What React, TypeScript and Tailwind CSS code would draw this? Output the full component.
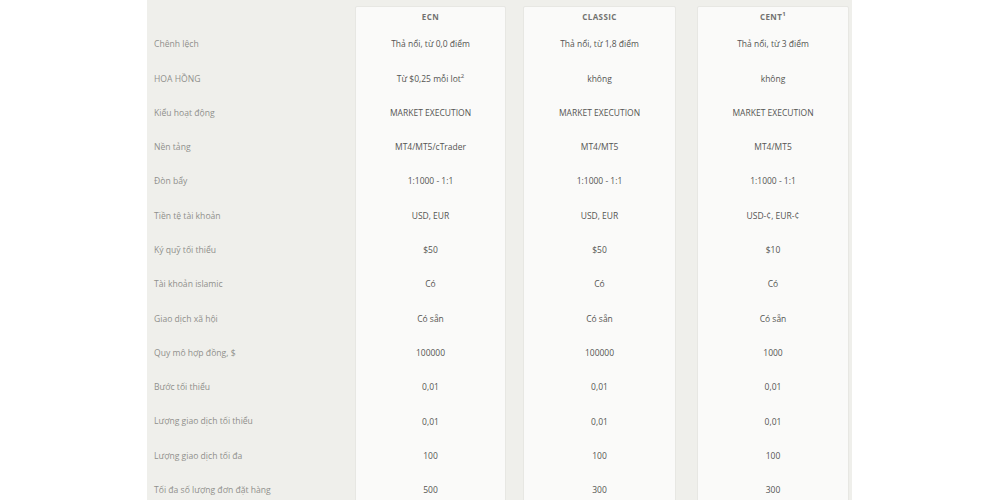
// @ts-nocheck
const labels = [
  "Chênh lệch",
  "HOA HỒNG",
  "Kiểu hoạt động",
  "Nền tảng",
  "Đòn bẩy",
  "Tiền tệ tài khoản",
  "Ký quỹ tối thiểu",
  "Tài khoản islamic",
  "Giao dịch xã hội",
  "Quy mô hợp đồng, $",
  "Bước tối thiểu",
  "Lượng giao dịch tối thiểu",
  "Lượng giao dịch tối đa",
  "Tối đa số lượng đơn đặt hàng",
];

const accounts = [
  {
    name: "ECN",
    width: "w-[151px]",
    gap: "ml-0",
    values: [
      "Thả nổi, từ 0,0 điểm",
      <>Từ $0,25 mỗi lot<sup className="text-[6px]">2</sup></>,
      "MARKET EXECUTION",
      "MT4/MT5/cTrader",
      "1:1000 - 1:1",
      "USD, EUR",
      "$50",
      "Có",
      "Có sẵn",
      "100000",
      "0,01",
      "0,01",
      "100",
      "500",
    ],
  },
  {
    name: "CLASSIC",
    width: "w-[153px]",
    gap: "ml-[17px]",
    values: [
      "Thả nổi, từ 1,8 điểm",
      "không",
      "MARKET EXECUTION",
      "MT4/MT5",
      "1:1000 - 1:1",
      "USD, EUR",
      "$50",
      "Có",
      "Có sẵn",
      "100000",
      "0,01",
      "0,01",
      "100",
      "300",
    ],
  },
  {
    name: <>CENT<sup className="text-[6px]">1</sup></>,
    width: "w-[152px]",
    gap: "ml-[21px]",
    values: [
      "Thả nổi, từ 3 điểm",
      "không",
      "MARKET EXECUTION",
      "MT4/MT5",
      "1:1000 - 1:1",
      "USD-¢, EUR-¢",
      "$10",
      "Có",
      "Có sẵn",
      "1000",
      "0,01",
      "0,01",
      "100",
      "300",
    ],
  },
];

export default function App() {
  return (
    <div className="w-[1000px] h-[500px] overflow-hidden bg-white font-['Open_Sans',sans-serif]">
      <div className="ml-[147px] w-[705px] h-full bg-[#efefeb] flex">
        {/* labels */}
        <div className="w-[208px] pt-[27.5px] pl-[7px]">
          {labels.map((label, i) => (
            <div key={i} className="h-[34.3px] flex items-center text-[8.6px] text-[#8f8f8c]">
              {label}
            </div>
          ))}
        </div>

        {/* account cards */}
        {accounts.map((acc, i) => (
          <div
            key={i}
            className={`${acc.width} ${acc.gap} mt-[6px] h-[520px] bg-[#fafaf9] border border-[#e7e7e3] rounded-t-[2px] flex flex-col`}
          >
            <div className="h-[20.5px] flex items-center justify-center text-[8px] font-bold tracking-[0.05em] text-[#727270]">
              {acc.name}
            </div>
            {acc.values.map((v, j) => (
              <div key={j} className="h-[34.3px] flex items-center justify-center text-[8.5px] text-[#555553]">
                {v}
              </div>
            ))}
          </div>
        ))}
      </div>
    </div>
  );
}
